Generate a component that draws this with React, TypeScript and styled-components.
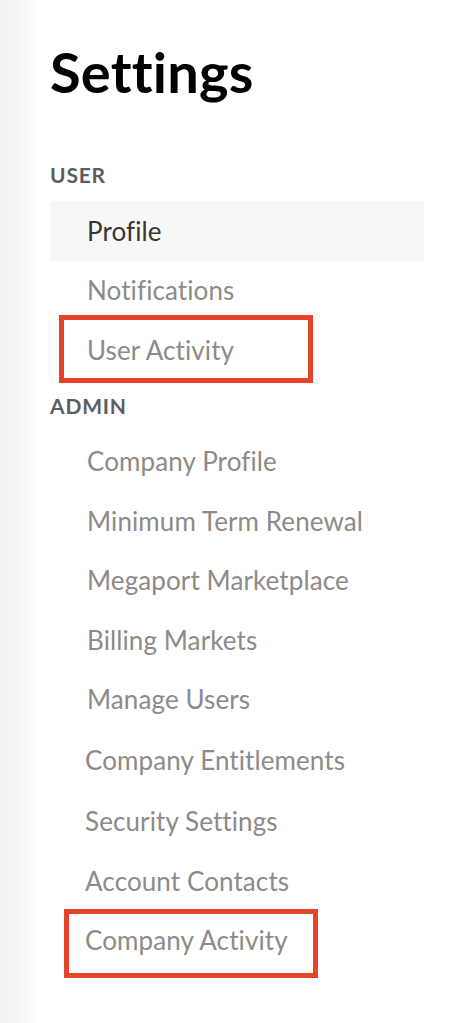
import React from "react";
import styled, { createGlobalStyle } from "styled-components";

const Global = createGlobalStyle`
  html, body { margin: 0; padding: 0; background: #fff; }
  body { font-family: "Lato", "Open Sans", sans-serif; }
`;

const Page = styled.div`
  min-height: 1023px;
  width: 468px;
  box-sizing: border-box;
  background: linear-gradient(to right, #f1f1f1 0px, #f6f6f6 20px, #ffffff 42px);
  padding: 39px 44px 0 50px;
`;

const Title = styled.h1`
  margin: 0;
  font-size: 56px;
  line-height: 66px;
  font-weight: 700;
  color: #000;
  letter-spacing: 0.2px;
`;

const SectionLabel = styled.div<{ $first?: boolean }>`
  margin: ${(p) => (p.$first ? "58px" : "14px")} 0 14px 0;
  font-size: 21px;
  line-height: 24px;
  font-weight: 700;
  color: #5d5d61;
  letter-spacing: 0.8px;
  text-transform: uppercase;
`;

const Menu = styled.ul`
  list-style: none;
  margin: 0;
  padding: 0;
  display: flex;
  flex-direction: column;
`;

type ItemProps = {
  $active?: boolean;
  $indent: number;
  $height: number;
  $mark?: boolean;
  $markX: number;
  $markY: number;
  $markH: number;
};

const Item = styled.li<ItemProps>`
  position: relative;
  height: ${(p) => p.$height}px;
  display: flex;
  align-items: center;
  padding-left: ${(p) => p.$indent}px;
  font-size: 26px;
  letter-spacing: 0.1px;
  color: ${(p) => (p.$active ? "#353535" : "#8e8a88")};
  background: ${(p) => (p.$active ? "#f7f7f7" : "transparent")};
  &::after {
    content: "";
    display: ${(p) => (p.$mark ? "block" : "none")};
    position: absolute;
    left: ${(p) => p.$markX}px;
    top: ${(p) => p.$markY}px;
    width: 254px;
    height: ${(p) => p.$markH}px;
    box-sizing: border-box;
    border: 5px solid #e7432b;
  }
`;

type Entry = {
  label: string;
  active?: boolean;
  indent?: number;
  height?: number;
  mark?: [number, number, number];
};

const userItems: Entry[] = [
  { label: "Profile", active: true },
  { label: "Notifications" },
  { label: "User Activity", mark: [9, -5, 68] },
];

const adminItems: Entry[] = [
  { label: "Company Profile" },
  { label: "Minimum Term Renewal" },
  { label: "Megaport Marketplace" },
  { label: "Billing Markets" },
  { label: "Manage Users" },
  { label: "Company Entitlements", indent: 35, height: 62.5 },
  { label: "Security Settings", indent: 35 },
  { label: "Account Contacts", indent: 35 },
  { label: "Company Activity", indent: 35, mark: [14, -2, 69] },
];

const renderItems = (items: Entry[]) =>
  items.map((it) => (
    <Item
      key={it.label}
      $active={it.active}
      $indent={it.indent ?? 37}
      $height={it.height ?? 59.5}
      $mark={!!it.mark}
      $markX={it.mark ? it.mark[0] : 0}
      $markY={it.mark ? it.mark[1] : 0}
      $markH={it.mark ? it.mark[2] : 0}
    >
      {it.label}
    </Item>
  ));

export default function App() {
  return (
    <>
      <Global />
      <Page>
        <Title>Settings</Title>
        <SectionLabel $first>User</SectionLabel>
        <Menu>{renderItems(userItems)}</Menu>
        <SectionLabel>Admin</SectionLabel>
        <Menu>{renderItems(adminItems)}</Menu>
      </Page>
    </>
  );
}
